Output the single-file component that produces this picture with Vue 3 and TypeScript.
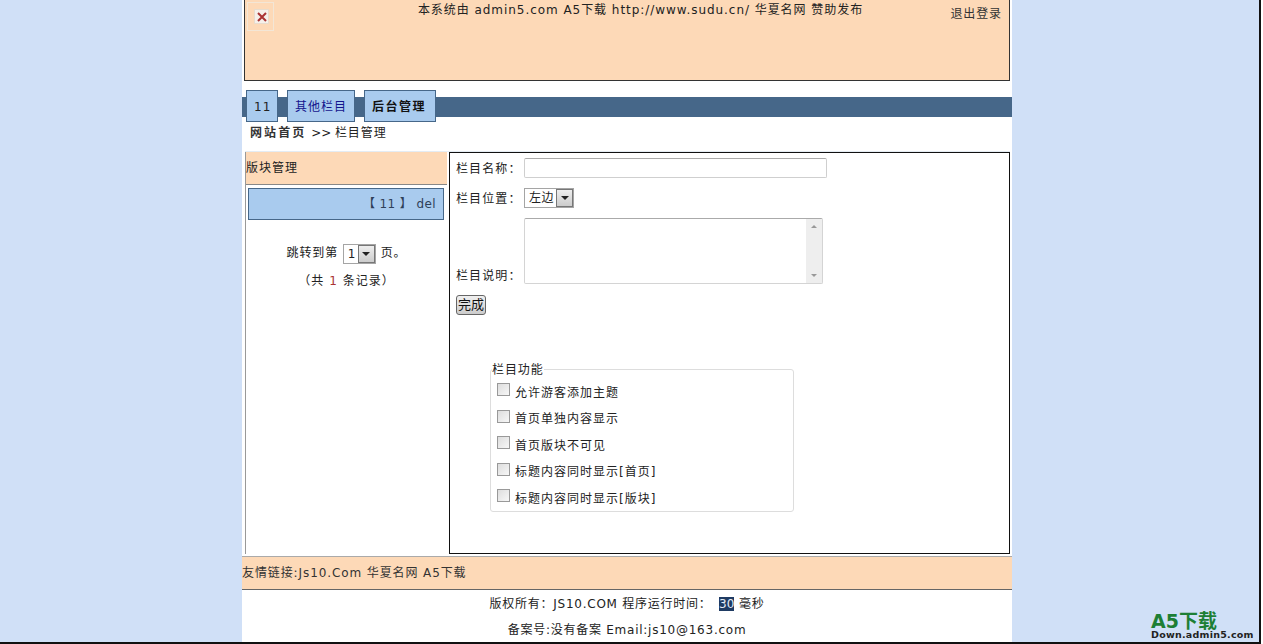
<script setup lang="ts">
const features: string[] = [
  '允许游客添加主题',
  '首页单独内容显示',
  '首页版块不可见',
  '标题内容同时显示[首页]',
  '标题内容同时显示[版块]',
]
</script>

<template>
  <div class="screen">
    <div class="wrap">
      <header class="head">
        <div class="broken"><span class="brokenbox"><svg width="10" height="10" viewBox="0 0 10 10"><path d="M1 1 9 9M9 1 1 9" stroke="#a33" stroke-width="2" /></svg></span></div>
        <div class="sponsor">本系统由 admin5.com A5下载 http://www.sudu.cn/ 华夏名网 赞助发布</div>
        <div class="logout">退出登录</div>
      </header>

      <nav class="navbar">
        <a class="tab t1">11</a>
        <a class="tab t2">其他栏目</a>
        <a class="tab t3">后台管理</a>
      </nav>

      <div class="crumb"><b>网站首页</b> <span class="gt">&gt;&gt;</span> 栏目管理</div>

      <div class="main">
        <aside class="side">
          <div class="side-title">版块管理</div>
          <div class="side-item">【 11 】 del</div>
          <div class="jump">跳转到第 <span class="sel small"><span class="val">1</span><span class="arrow"><i></i></span></span> 页。</div>
          <div class="count">（共 <em>1</em> 条记录）</div>
        </aside>

        <section class="content">
          <div class="row r-name"><label>栏目名称：</label><span class="input"></span></div>
          <div class="row r-pos"><label>栏目位置：</label><span class="sel"><span class="val">左边</span><span class="arrow"><i></i></span></span></div>
          <div class="row r-desc">
            <label>栏目说明：</label>
            <span class="area"><span class="bar"><i class="up"></i><i class="down"></i></span></span>
          </div>
          <button class="done" type="button">完成</button>

          <fieldset class="group">
            <legend>栏目功能</legend>
            <label v-for="f in features" :key="f" class="check"><span class="cb"></span>{{ f }}</label>
          </fieldset>
        </section>
      </div>

      <div class="links">友情链接:Js10.Com 华夏名网 A5下载</div>
      <footer class="foot">
        <div>版权所有：JS10.COM 程序运行时间： <span class="hl">30</span> 毫秒</div>
        <div class="foot2">备案号:没有备案 Email:js10@163.com</div>
      </footer>
    </div>
    <div class="wm">
      <div class="wm1">A5下载</div>
      <div class="wm2">Down.admin5.com</div>
    </div>
  </div>
</template>

<style>
html, body { margin: 0; background: #fff; overflow: hidden; }
</style>

<style scoped>
.screen {
  position: relative;
  box-sizing: border-box;
  width: 1261px;
  height: 644px;
  overflow: hidden;
  background: #d0e0f7;
  border-right: 2px solid #111;
  border-bottom: 2px solid #111;
  font: 12px "DejaVu Sans", "Noto Sans CJK SC", sans-serif;
  color: #222;
}
.wrap {
  width: 770px;
  height: 642px;
  margin-left: 242px;
  background: #fff;
}
.head {
  box-sizing: border-box;
  position: relative;
  display: flex;
  justify-content: center;
  width: 766px;
  height: 81px;
  margin-left: 2px;
  background: #fdd9b7;
  border: 1px solid #333;
  border-top: 0;
}
.broken { position: absolute; left: 2px; top: 2px; width: 27px; height: 29px; box-sizing: border-box; border: 1px solid #f3e6d6; }
.brokenbox { position: absolute; left: 6px; top: 6px; width: 15px; height: 15px; box-sizing: border-box; border: 1px solid #e8dccd; background: #f6f0ea; display: flex; align-items: center; justify-content: center; }
.sponsor { padding-top: 1px; letter-spacing: 0.95px; line-height: 18px; margin-left: 27px; }
.logout { position: absolute; right: 7px; top: 5px; line-height: 18px; color: #333; letter-spacing: .9px; }
.navbar {
  display: flex;
  gap: 9px;
  height: 20px;
  margin-top: 16px;
  padding-left: 4px;
  background: #466789;
}
.tab {
  box-sizing: border-box;
  height: 32px;
  margin-top: -7px;
  padding: 0 7px;
  line-height: 32px;
  background: #a9cbee;
  border: 1px solid #466789;
  letter-spacing: 1px;
  white-space: nowrap;
}
.t1 { width: 32px; }
.t2 { width: 68px; color: #14148c; }
.t3 { width: 72px; font-weight: bold; color: #111; letter-spacing: 1.5px; }
.crumb { padding: 1px 0 0 8px; line-height: 18px; letter-spacing: .9px; box-sizing: border-box; margin-top: 6px; height: 28px; }
.crumb b { color: #333; letter-spacing: 2.1px; }
.gt { letter-spacing: 0; margin-right: -1px; }
.main { display: flex; margin: 0 2px 0 3px; height: 402px; border-top: 1px solid #e4ecf3; }
.side { width: 202px; box-sizing: border-box; border-left: 1px solid #999; margin-right: 2px; flex: none; }
.side-title { box-sizing: border-box; height: 33px; line-height: 32px; background: #fdd9b7; border-bottom: 1px solid #888; letter-spacing: 1px; }
.side-item { box-sizing: border-box; height: 32px; margin: 3px 3px 0 2px; padding-right: 7px; line-height: 30px; text-align: right; background: #a9cbee; border: 1px solid #466789; color: #2f4058; letter-spacing: .4px; white-space: pre; }
.jump { margin-top: 23px; text-align: center; line-height: 20px; letter-spacing: .9px; }
.count { margin-top: 7px; text-align: center; line-height: 20px; letter-spacing: 1px; }
.count em { font-style: normal; color: #a33; }
.content { flex: 1; box-sizing: border-box; border: 1px solid #111; padding: 5px 6px; }
.row { display: flex; align-items: flex-end; }
.row label { width: 68px; letter-spacing: 1.1px; line-height: 18px; flex: none; }
.input { box-sizing: border-box; width: 303px; height: 20px; border: 1px solid #cfcfcf; border-top-color: #aaa; border-radius: 2px; }
.r-pos { margin-top: 10px; }
.sel { display: inline-flex; box-sizing: border-box; height: 20px; border: 1px solid #a5a5a5; vertical-align: middle; background: #fff; }
.val { padding: 0 2px 0 4px; line-height: 18px; letter-spacing: .5px; }
.arrow { box-sizing: border-box; width: 17px; border: 1px solid #777; background: linear-gradient(#eee, #ccc); display: flex; align-items: center; justify-content: center; }
.arrow i { width: 0; height: 0; border: 4px solid transparent; border-top: 4px solid #222; border-bottom: 0; }
.r-desc { margin-top: 10px; }
.area { position: relative; box-sizing: border-box; width: 299px; height: 66px; border: 1px solid #d4d4d4; border-top-color: #aaa; border-radius: 2px; }
.bar { position: absolute; right: 0; top: 0; bottom: 0; width: 16px; background: #eee; }
.up, .down { position: absolute; left: 5px; width: 0; height: 0; border: 3px solid transparent; }
.up { top: 6px; border-bottom: 3px solid #999; border-top: 0; }
.down { bottom: 6px; border-top: 3px solid #999; border-bottom: 0; }
.row.r-desc label { margin-bottom: -1px; }
.done { display: block; box-sizing: border-box; width: 30px; height: 20px; margin-top: 11px; padding: 0; border: 1px solid #666; border-radius: 3px; background: linear-gradient(#f0f0f0, #ccc); font-family: inherit; font-size: 13px; color: #111; line-height: 16px; }
.group { box-sizing: border-box; width: 304px; height: 151px; margin: 46px 0 0 34px; padding: 1px 0 0 6px; border: 1px solid #ddd; border-radius: 3px; }
legend { padding: 2px 0 0; margin-left: -5px; letter-spacing: .9px; line-height: 14px; }
.check { display: flex; align-items: center; height: 26.5px; letter-spacing: 1px; }
.cb { box-sizing: border-box; width: 13px; height: 13px; margin-right: 5px; margin-top: -3px; border: 1px solid #999; background: linear-gradient(135deg, #ddd, #f7f7f7); }
.links { box-sizing: border-box; height: 34px; margin-top: 2px; line-height: 32px; background: #fdd9b7; border-top: 1px solid #aaa; border-bottom: 1px solid #666; letter-spacing: .9px; color: #333; white-space: nowrap; }
.foot { text-align: center; letter-spacing: .75px; line-height: 20px; padding-top: 4px; }
.foot2 { margin-top: 6px; }
.hl { background: #1f3b63; color: #e4ecf7; letter-spacing: 0; margin-left: 3px; }
.wm { position: absolute; right: 6px; bottom: 2px; width: 102px; }
.wm1 { font: bold 19px/16px "DejaVu Sans", "Noto Sans CJK SC", sans-serif; color: #1d7f35; }
.wm2 { font: bold 9.5px/11px "DejaVu Sans", sans-serif; color: #222; letter-spacing: .25px; white-space: nowrap; }
</style>
